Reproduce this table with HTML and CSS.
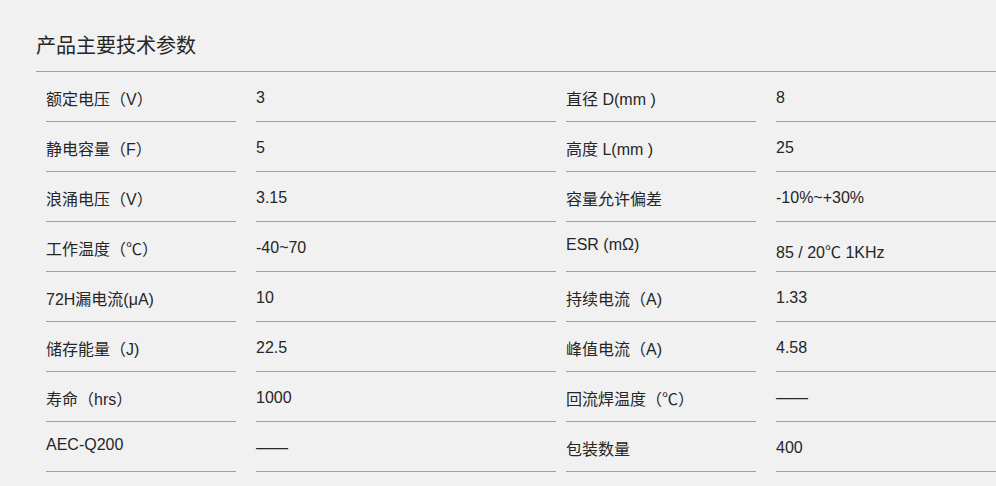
FILE: index.html
```html
<!DOCTYPE html>
<html lang="zh-CN">
<head>
<meta charset="utf-8">
<title>产品主要技术参数</title>
<link rel="stylesheet" href="styles.css">
</head>
<body>
<section class="specs">
  <h2 class="specs-title">产品主要技术参数</h2>
  <div class="spec-grid">
    <div class="label">额定电压（V）</div><div class="value">3</div>
    <div class="label">直径 D(mm )</div><div class="value">8</div>

    <div class="label">静电容量（F）</div><div class="value">5</div>
    <div class="label">高度 L(mm )</div><div class="value">25</div>

    <div class="label">浪涌电压（V）</div><div class="value">3.15</div>
    <div class="label">容量允许偏差</div><div class="value">-10%~+30%</div>

    <div class="label">工作温度（℃）</div><div class="value">-40~70</div>
    <div class="label">ESR (mΩ)</div><div class="value">85 / 20℃ 1KHz</div>

    <div class="label">72H漏电流(μA)</div><div class="value">10</div>
    <div class="label">持续电流（A)</div><div class="value">1.33</div>

    <div class="label">储存能量（J)</div><div class="value">22.5</div>
    <div class="label">峰值电流（A)</div><div class="value">4.58</div>

    <div class="label">寿命（hrs）</div><div class="value">1000</div>
    <div class="label">回流焊温度（℃）</div><div class="value">——</div>

    <div class="label">AEC-Q200</div><div class="value">——</div>
    <div class="label">包装数量</div><div class="value">400</div>
  </div>
</section>
</body>
</html>
```

FILE: styles.css
```css
html, body {
  margin: 0;
  padding: 0;
  background: #f1f1f1;
}

body {
  font-family: "Liberation Sans", "Noto Sans CJK SC", sans-serif;
  color: #262626;
  font-size: 16px;
  overflow: hidden;
}

.specs {
  margin-left: 36px;
  width: 960px;
}

.specs-title {
  margin: 0;
  padding: 31px 0 10px;
  font-size: 20px;
  line-height: 30px;
  font-weight: normal;
  color: #262626;
  border-bottom: 1px solid #a0a0a0;
}

.spec-grid {
  display: grid;
  grid-template-columns: 200px 320px 200px 240px;
  grid-auto-rows: 50px;
}

.label,
.value {
  box-sizing: border-box;
  border-bottom: 1px solid #a0a0a0;
  line-height: normal;
  white-space: nowrap;
}

.label {
  margin-left: 10px;
  padding-top: 14px;
}

.value {
  margin-left: 20px;
  padding-top: 17px;
}
```
